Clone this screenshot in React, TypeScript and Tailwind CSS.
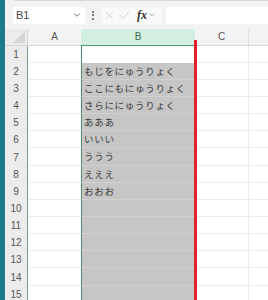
import { ChevronDown, X, Check } from 'lucide-react'

const rows = [
  '',
  'もじをにゅうりょく',
  'ここにもにゅうりょく',
  'さらににゅうりょく',
  'あああ',
  'いいい',
  'ううう',
  'えええ',
  'おおお',
  '',
  '',
  '',
  '',
  '',
  '',
]

export default function App() {
  return (
    <div className="w-[268px] h-[300px] flex overflow-hidden bg-[#f3f3f3] font-['Liberation_Sans','Noto_Sans_CJK_JP',sans-serif]">
      <div className="w-[5px] shrink-0 bg-[#1e7a8c]" />
      <div className="flex-1 flex flex-col min-w-0 relative">
        <div className="h-[4px] ml-[9px] bg-white border-b border-l border-[#d9d9d9] rounded-bl-[4px]" />

        <div className="mt-[6px] h-[18px] flex items-stretch">
          <div className="ml-[8px] w-[72px] bg-white rounded-[3px] flex items-center justify-between px-[3px]">
            <span className="text-[11px] text-[#444]">B1</span>
            <ChevronDown className="w-[10px] h-[10px] text-[#555]" strokeWidth={2} />
          </div>
          <div className="w-[16px] flex flex-col items-center justify-center gap-[1.5px]">
            <span className="w-[2px] h-[2px] rounded-full bg-[#555]" />
            <span className="w-[2px] h-[2px] rounded-full bg-[#555]" />
            <span className="w-[2px] h-[2px] rounded-full bg-[#555]" />
          </div>
          <div className="w-[61px] bg-[#f9f9f9] rounded-[3px] flex items-center pl-[2px]">
            <X className="w-[13px] h-[13px] text-[#c4c4c4]" strokeWidth={1.3} />
            <Check className="w-[13px] h-[13px] ml-[2px] text-[#c4c4c4]" strokeWidth={1.3} />
            <span className="ml-[6px] text-[12px] italic font-bold text-[#333] font-['Liberation_Serif',serif] leading-none">
              fx
            </span>
            <ChevronDown className="w-[8px] h-[8px] ml-[1px] text-[#999]" strokeWidth={2} />
          </div>
          <div className="ml-[4px] flex-1 bg-white rounded-l-[3px]" />
        </div>

        <div className="mt-[5px] grid grid-cols-[23px_53px_114px_53px_1fr] auto-rows-[17.15px] text-[#333]">
          <div className="bg-[#ececec] border-r border-b border-[#d6d6d6] relative overflow-hidden">
            <div className="absolute right-[2px] bottom-[2px] w-0 h-0 border-l-[12px] border-l-transparent border-b-[12px] border-b-[#d6d6d6]" />
          </div>
          <div className="bg-[#f3f3f3] border-b border-[#d6d6d6] flex items-center justify-center text-[10px] text-[#555]">A</div>
          <div className="bg-[#d3efe0] border-b-[1.5px] border-[#4d9a72] flex items-center justify-center text-[10px] text-[#3d6b55]">B</div>
          <div className="bg-[#f3f3f3] border-b border-[#d6d6d6] flex items-center justify-center text-[10px] text-[#555]">C</div>
          <div className="bg-[#f3f3f3] border-b border-[#d6d6d6] border-l border-l-[#e2e2e2]" />

          {rows.map((t, i) => (
            <Row key={i} n={i + 1} text={t} />
          ))}
        </div>

        <div className="absolute left-[189px] top-[40px] bottom-0 w-[3px] bg-[#e0202a]" />
      </div>
    </div>
  )
}

function Row({ n, text }: { n: number; text: string }) {
  const first = n === 1
  return (
    <>
      <div className="bg-[#ececec] border-r border-[#7f9f90] flex items-center justify-center text-[10px] text-[#555]">
        {n}
      </div>
      <div className="bg-white border-b border-[#ececec]" />
      <div
        className={
          first
            ? 'bg-white border-l border-[#4d8f6e]'
            : 'bg-[#c6c6c6] border-l border-[#4d8f6e] border-b border-b-[#d0d0d0] flex items-center pl-[2px] text-[9.5px] tracking-[0.7px] text-[#3a3a3a] whitespace-nowrap overflow-hidden font-["Noto_Sans_CJK_JP",sans-serif]'
        }
      >
        {text}
      </div>
      <div className="bg-white border-b border-[#ececec]" />
      <div className="bg-white border-b border-l border-[#ececec]" />
    </>
  )
}
